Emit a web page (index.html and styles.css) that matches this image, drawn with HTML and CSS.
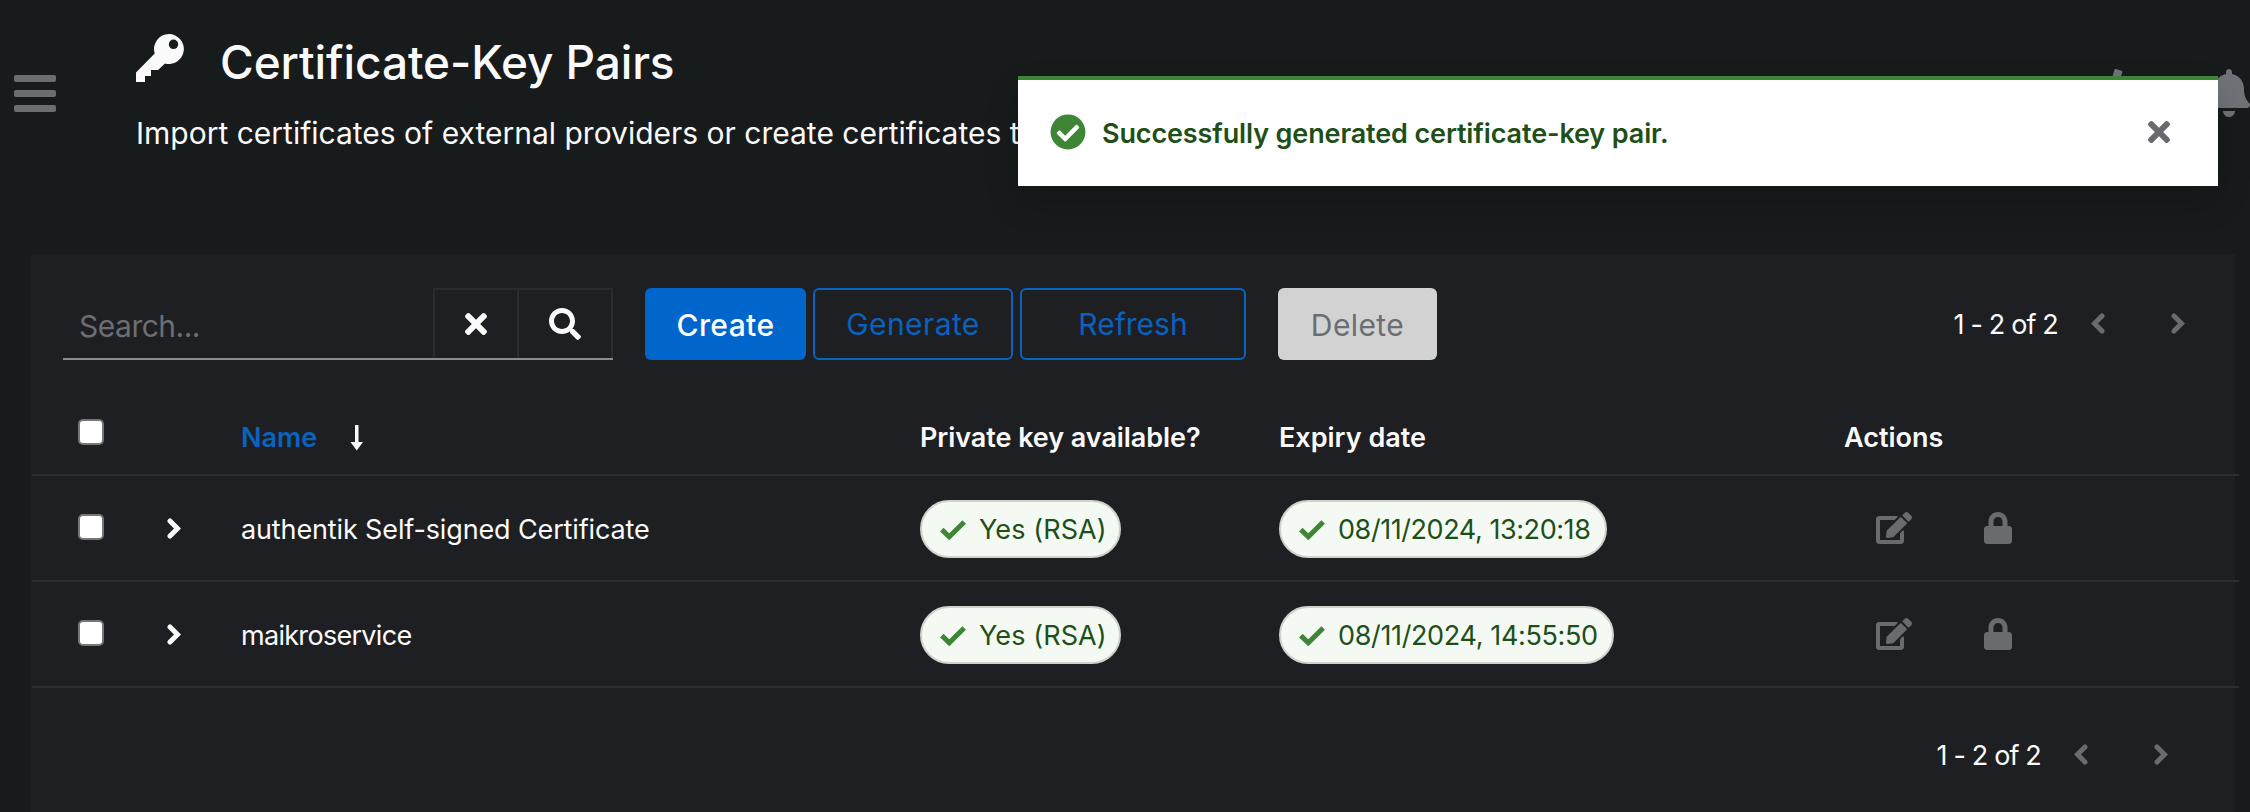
FILE: index.html
```html
<!DOCTYPE html>
<html lang="en">
<head>
<meta charset="utf-8">
<title>Certificate-Key Pairs</title>
<link rel="stylesheet" href="styles.css">
</head>
<body>
<svg class="defs" width="0" height="0" aria-hidden="true">
  <symbol id="check" viewBox="0 0 28 28"><path d="M2.800 14.600l7.500 7.200L25.200 7" fill="none" stroke="currentColor" stroke-width="5"/></symbol>
  <symbol id="times" viewBox="0 0 352 512"><path d="M242.720 256l100.070-100.070c12.280-12.280 12.280-32.190 0-44.480l-22.240-22.240c-12.280-12.280-32.190-12.280-44.480 0L176 189.280 75.930 89.210c-12.280-12.280-32.190-12.280-44.480 0L9.210 111.450c-12.280 12.280-12.280 32.190 0 44.480L109.280 256 9.210 356.070c-12.280 12.280-12.280 32.190 0 44.480l22.240 22.240c12.280 12.280 32.200 12.280 44.480 0L176 322.720l100.070 100.070c12.280 12.280 32.200 12.280 44.480 0l22.240-22.240c12.280-12.280 12.280-32.190 0-44.480L242.720 256z"/></symbol>
  <symbol id="right" viewBox="0 0 14 21"><path d="M3 3l7.500 7.500L3 18" fill="none" stroke="currentColor" stroke-width="5" stroke-linecap="round"/></symbol>
  <symbol id="left" viewBox="0 0 14 21"><path d="M11 3l-7.500 7.500L11 18" fill="none" stroke="currentColor" stroke-width="5" stroke-linecap="round"/></symbol>
  <symbol id="edit" viewBox="0 0 576 512"><path d="M402.600 83.200l90.200 90.200c3.800 3.800 3.800 10 0 13.800L274.400 405.600l-92.800 10.300c-12.400 1.400-22.900-9.100-21.500-21.500l10.300-92.800L388.800 83.200c3.800-3.800 10-3.800 13.800 0zm162-22.900l-48.800-48.800c-15.200-15.200-39.900-15.200-55.200 0l-35.400 35.400c-3.800 3.800-3.800 10 0 13.800l90.200 90.200c3.800 3.800 10 3.800 13.800 0l35.400-35.400c15.200-15.300 15.200-40 0-55.200zM384 346.200V448H64V128h229.800c3.200 0 6.200-1.300 8.500-3.500l40-40c7.600-7.600 2.200-20.500-8.500-20.500H48C21.500 64 0 85.500 0 112v352c0 26.500 21.500 48 48 48h352c26.500 0 48-21.500 48-48V306.200c0-10.700-12.900-16-20.500-8.500l-40 40c-2.200 2.300-3.500 5.300-3.500 8.500z"/></symbol>
  <symbol id="lock" viewBox="0 0 448 512"><path d="M400 224h-24v-72C376 68.200 307.800 0 224 0S72 68.200 72 152v72H48c-26.500 0-48 21.500-48 48v192c0 26.500 21.500 48 48 48h352c26.500 0 48-21.500 48-48V272c0-26.500-21.500-48-48-48zm-104 0H152v-72c0-39.700 32.300-72 72-72s72 32.300 72 72v72z"/></symbol>
</svg>

<header class="header">
  <button class="menu" aria-label="Menu"><i></i><i></i><i></i></button>
  <div class="heading">
    <h1 class="title">
      <svg class="key" viewBox="0 0 48 48"><path fill-rule="evenodd" d="M33 0a15 15 0 1 1-4 29.500L22 36h-7v6H9v6H0V38.500L18.700 19.500A15 15 0 0 1 33 0zM32.800 10.300a4.700 4.700 0 1 0 9.400 0 4.700 4.700 0 1 0-9.400 0z"/></svg>
      <span class="title-text">Certificate-Key Pairs</span>
    </h1>
    <p class="subtitle">Import certificates of external providers or create certificates t</p>
  </div>
  <div class="tools">
    <svg class="code" viewBox="0 0 640 512"><path d="M278.900 511.500l-61-17.700c-6.400-1.800-10-8.500-8.200-14.900L346.200 8.700c1.800-6.400 8.500-10 14.900-8.200l61 17.700c6.400 1.800 10 8.500 8.200 14.900L293.800 503.300c-1.900 6.400-8.500 10.100-14.900 8.200z"/></svg>
    <svg class="bell" viewBox="0 0 448 512"><path d="M224 512c35.320 0 63.970-28.650 63.970-64H160.030c0 35.350 28.650 64 63.970 64zm215.390-149.710c-19.320-20.760-55.470-51.990-55.470-154.290 0-77.700-54.480-139.900-127.940-155.160V32c0-17.670-14.320-32-31.980-32s-31.980 14.330-31.980 32v20.840C118.560 68.100 64.080 130.300 64.080 208c0 102.300-36.150 133.530-55.470 154.290-6 6.450-8.660 14.160-8.610 21.710.110 16.400 12.980 32 32.100 32h383.800c19.120 0 32-15.600 32.100-32 .050-7.550-2.610-15.270-8.610-21.710z"/></svg>
  </div>
</header>

<div class="toast" role="status">
  <svg class="toast-icon" viewBox="0 0 512 512"><path d="M504 256c0 136.967-111.033 248-248 248S8 392.967 8 256 119.033 8 256 8s248 111.033 248 248zM227.314 387.314l184-184c6.248-6.248 6.248-16.379 0-22.627l-22.627-22.627c-6.248-6.249-16.379-6.249-22.628 0L216 308.118l-70.059-70.059c-6.248-6.248-16.379-6.248-22.628 0l-22.627 22.627c-6.248 6.248-6.248 16.379 0 22.627l104 104c6.249 6.249 16.379 6.249 22.628.001z"/></svg>
  <span class="toast-text">Successfully generated certificate-key pair.</span>
  <svg class="toast-close"><use href="#times"/></svg>
</div>

<main class="panel">
  <div class="toolbar">
    <div class="search">
      <span class="search-input">Search...</span>
      <button class="search-button clear" aria-label="Clear"><svg class="x"><use href="#times"/></svg></button>
      <button class="search-button go" aria-label="Search"><svg class="glass" viewBox="0 0 512 512"><path d="M505 442.700L405.300 343c-4.500-4.500-10.600-7-17-7H372c27.600-35.300 44-79.700 44-128C416 93.100 322.900 0 208 0S0 93.100 0 208s93.100 208 208 208c48.300 0 92.700-16.400 128-44v16.300c0 6.400 2.500 12.500 7 17l99.700 99.700c9.400 9.400 24.600 9.400 33.900 0l28.300-28.300c9.400-9.400 9.400-24.600.1-34zM208 336c-70.700 0-128-57.200-128-128 0-70.700 57.200-128 128-128 70.700 0 128 57.200 128 128 0 70.700-57.200 128-128 128z"/></svg></button>
    </div>
    <button class="btn create"><span>Create</span></button>
    <button class="btn outline generate"><span>Generate</span></button>
    <button class="btn outline refresh"><span>Refresh</span></button>
    <button class="btn delete"><span>Delete</span></button>
    <nav class="pager"><span class="pager-text">1 - 2 of 2</span><svg class="chev"><use href="#left"/></svg><svg class="chev"><use href="#right"/></svg></nav>
  </div>

  <div class="table">
    <div class="row head">
      <span class="box"></span>
      <span></span>
      <span class="name-head"><span class="h-name">Name</span><svg class="sort" viewBox="0 0 13 26"><path d="M5 0h3.500v17H13l-6.250 8.500L.5 17H5z"/></svg></span>
      <span class="h-key">Private key available?</span>
      <span class="h-exp">Expiry date</span>
      <span class="h-act">Actions</span>
    </div>
    <div class="row">
      <span class="box"></span>
      <svg class="chev expand"><use href="#right"/></svg>
      <span class="name n1">authentik Self-signed Certificate</span>
      <span class="cell"><span class="label l-yes"><svg class="tick"><use href="#check"/></svg><span class="yes">Yes (RSA)</span></span></span>
      <span class="cell"><span class="label l-d1"><svg class="tick"><use href="#check"/></svg><span class="d1">08/11/2024, 13:20:18</span></span></span>
      <span class="actions"><svg class="edit"><use href="#edit"/></svg><svg class="lock"><use href="#lock"/></svg></span>
    </div>
    <div class="row">
      <span class="box"></span>
      <svg class="chev expand"><use href="#right"/></svg>
      <span class="name n2">maikroservice</span>
      <span class="cell"><span class="label l-yes"><svg class="tick"><use href="#check"/></svg><span class="yes">Yes (RSA)</span></span></span>
      <span class="cell"><span class="label l-d2"><svg class="tick"><use href="#check"/></svg><span class="d2">08/11/2024, 14:55:50</span></span></span>
      <span class="actions"><svg class="edit"><use href="#edit"/></svg><svg class="lock"><use href="#lock"/></svg></span>
    </div>
  </div>

  <nav class="pager bottom"><span class="pager-text">1 - 2 of 2</span><svg class="chev"><use href="#left"/></svg><svg class="chev"><use href="#right"/></svg></nav>
</main>
</body>
</html>
```
FILE: styles.css
```css
* { box-sizing: border-box; }
body {
  margin: 0; width: 2250px; height: 812px; overflow: hidden; position: relative;
  background: #171b1c; color: #fafafa;
  font: 400 27px/40px Inter, "Liberation Sans", sans-serif;
}
svg { fill: currentColor; display: block; flex: none; }
.defs { position: absolute; }
button { font: inherit; color: inherit; background: none; border: 0; padding: 0; margin: 0; }
span { white-space: nowrap; }

.header { display: flex; height: 254px; }
.menu { width: 42px; height: 37px; margin: 75px 80px 0 14px; display: flex; flex-direction: column; justify-content: space-between; }
.menu i { height: 7px; background: #6a6e70; border-radius: 2px; }
.heading { flex: 1; padding-top: 32px; }
.title { display: flex; margin: 0; height: 60px; font-size: 46px; line-height: 60px; font-weight: 500; letter-spacing: -.1px; }
.key { width: 48px; height: 48px; margin: 2px 36px 0 0; }
.subtitle { margin: 21px 0 0; font-size: 30px; line-height: 40px; white-space: nowrap; }
.tools { display: flex; gap: 66px; padding-top: 69px; color: #6f7276; }
.code { width: 60px; height: 48px; }
.bell { width: 42px; height: 48px; }

.toast {
  position: absolute; left: 1018px; top: 76px; width: 1200px; height: 110px;
  display: flex; align-items: center; padding: 0 48px 3px 32px;
  background: #fff; border-top: 4px solid #3e8635; color: #1e4f18;
  font-weight: 600; box-shadow: 0 16px 32px rgba(3, 3, 3, .16);
}
.toast-icon { width: 36px; height: 36px; color: #3e8635; margin-right: 16px; }
.toast-text { flex: 1; padding-top: 5px; letter-spacing: -.13px; }
.toast-close { width: 22px; height: 32px; color: #6a6a6e; }

.panel { margin: 0 15px 0 31px; height: 558px; background: #1e1f23; padding-top: 34px; display: flex; flex-direction: column; }
.toolbar { display: flex; padding: 0 0 0 32px; height: 72px; align-items: stretch; font-size: 30px; }
.search { display: flex; width: 550px; height: 72px; border-bottom: 2px solid #8a8b8f; margin-right: 32px; }
.search-input { flex: 1; padding: 18px 0 0 16px; color: #6d6e72; letter-spacing: -.5px; }
.search-button { border: 2px solid #2a2b2f; border-bottom: 0; display: flex; align-items: center; justify-content: center; }
.search-button.clear { width: 86px; }
.search-button.go { width: 94px; border-left: 0; }
.x { width: 22px; height: 32px; }
.glass { width: 32px; height: 32px; }
.btn { border-radius: 6px; height: 72px; padding-top: 2px; margin-right: 7px; letter-spacing: .4px; }
.create { width: 161px; background: #06c; color: #fff; font-weight: 500; }
.generate { width: 200px; }
.refresh { width: 226px; margin-right: 32px; }
.refresh span { letter-spacing: 0; }
.outline { border: 2px solid #0862be; color: #0862be; padding-top: 0; }
.delete { width: 159px; background: #d2d2d2; color: #6a6e73; }
.pager { margin-left: auto; display: flex; align-items: center; padding-right: 50px; font-size: 27px; }
.pager-text { letter-spacing: -.85px; padding-top: 2px; }
.pager .chev { color: #6a6b6f; margin: -1px 0 0 33px; }
.pager .chev + .chev { margin-left: 66px; }
.chev { width: 14px; height: 21px; }

.table { margin: 0 -4px 0 1px; }
.row {
  display: grid; grid-template-columns: 88px 74px 679px 359px 565px 1fr; padding-left: 47px;
  align-items: center; height: 106px; border-bottom: 2px solid #2b2d30;
}
.head { height: 116px; padding-top: 42px; font-weight: 600; }
.box { width: 26px; height: 26px; border: 2px solid #767678; border-radius: 5px; background: #fff; margin: -2px 0 0 -1px; }
.head .box { margin: -12px 0 0 -1px; }
.name-head { display: flex; align-items: center; }
.h-name { color: #0a63be; width: 109px; }
.h-key { letter-spacing: -.06px; }
.sort { width: 13px; height: 26px; }
.name { padding-top: 3px; }
.n1 { letter-spacing: -.13px; }
.n2 { letter-spacing: -.7px; }
.cell { display: flex; padding-top: 1px; }
.label {
  display: flex; align-items: center; height: 58px; padding: 0 0 0 17px;
  border: 2px solid #ccd3cb; border-radius: 29px; background: #f4faf3; color: #1e4f18;
}
.label span { padding-top: 2px; }
.tick { width: 28px; height: 28px; color: #3e8635; margin-right: 12px; }
.l-yes { width: 201px; }
.l-d1 { width: 328px; }
.l-d2 { width: 335px; }
.yes { letter-spacing: .1px; }
.d1 { letter-spacing: -.43px; }
.d2 { letter-spacing: -.36px; }
.actions { display: flex; color: #6a6b6f; padding-left: 32px; gap: 72px; margin-top: -1px; }
.edit { width: 36px; height: 32px; }
.lock { width: 28px; height: 32px; }
.bottom { height: 40px; margin-top: 47px; padding-right: 67px; }
```
